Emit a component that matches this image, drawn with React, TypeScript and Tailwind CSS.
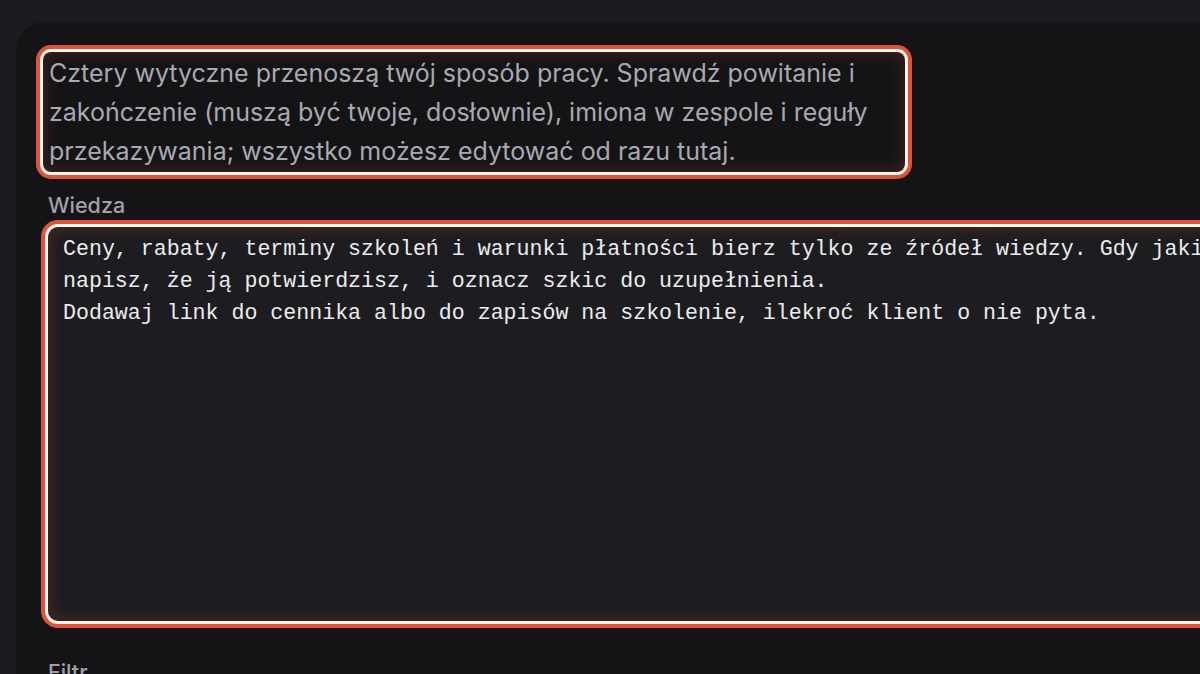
const intro =
  'Cztery wytyczne przenoszą twój sposób pracy. Sprawdź powitanie i zakończenie (muszą być twoje, dosłownie), imiona w zespole i reguły przekazywania; wszystko możesz edytować od razu tutaj.';

const knowledge = `Ceny, rabaty, terminy szkoleń i warunki płatności bierz tylko ze źródeł wiedzy. Gdy jakiejś informacji brakuje,
napisz, że ją potwierdzisz, i oznacz szkic do uzupełnienia.
Dodawaj link do cennika albo do zapisów na szkolenie, ilekroć klient o nie pyta.`;

// highlighted elements get a white + orange ring and a soft reddish inner glow
const highlight =
  'shadow-[0_0_0_3px_#fbf8f2,0_0_0_7px_#e0533a,inset_0_0_16px_rgba(190,60,40,0.35)]';

export default function App() {
  return (
    <div className="h-[674px] overflow-hidden bg-[#1c1c20] pl-4 pt-[22px] font-['Inter',sans-serif]">
      <div className="w-[1400px] h-[800px] rounded-tl-[28px] bg-[#141417] pl-8 pt-[30px]">
        <p
          className={`-ml-[5px] w-[862px] h-[120px] rounded-[8px] px-[6px] pt-[2px] text-[25px] leading-[39px] text-[#a9a9b1] ${highlight}`}
        >
          {intro}
        </p>

        <label className="block mt-[18px] mb-[7px] text-[21.5px] leading-[30px] font-medium text-[#a1a1aa]">
          Wiedza
        </label>
        <textarea
          defaultValue={knowledge}
          spellCheck={false}
          className={`block w-[1250px] h-[394px] resize-none rounded-[10px] bg-[#1d1d21] px-[15px] pt-[6px] font-['Liberation_Mono',monospace] text-[21.6px] leading-[32px] text-[#ececec] outline-none whitespace-pre overflow-hidden ${highlight}`}
        />

        <label className="block mt-[36px] text-[21.5px] leading-[30px] font-medium text-[#a1a1aa]">
          Filtr
        </label>
      </div>
    </div>
  );
}
